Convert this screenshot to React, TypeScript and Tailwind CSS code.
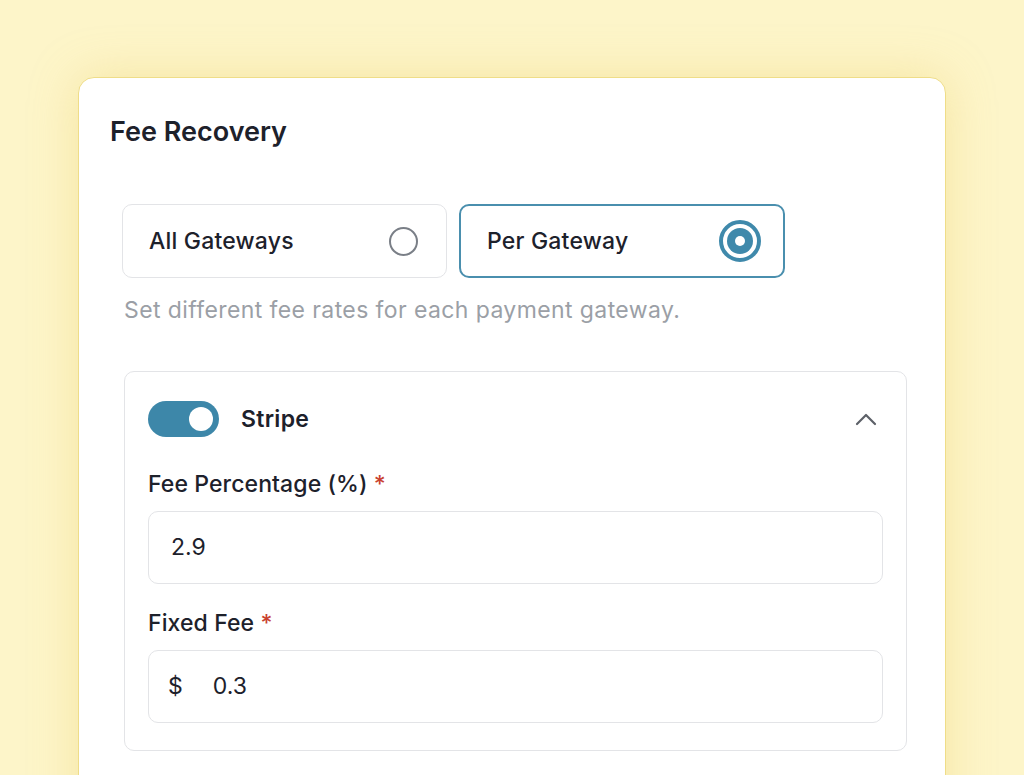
const font = { fontFamily: "Inter, 'Noto Sans', sans-serif" };

function Radio({ checked }: { checked: boolean }) {
  if (!checked) {
    return <span className="block h-[29px] w-[29px] rounded-full border-2 border-[#7a7f87] bg-white" />;
  }
  return (
    <span className="flex h-[42px] w-[42px] items-center justify-center rounded-full border-[4px] border-[#3f89ab] bg-white">
      <span className="flex h-[26px] w-[26px] items-center justify-center rounded-full bg-[#3f89ab]">
        <span className="h-[10px] w-[10px] rounded-full bg-white" />
      </span>
    </span>
  );
}

function GatewayOption({ label, checked }: { label: string; checked: boolean }) {
  return (
    <div
      className={
        checked
          ? "flex h-[74px] w-[326px] items-center justify-between rounded-[10px] border-2 border-[#4a8fae] bg-white pl-[26px] pr-[22px]"
          : "flex h-[74px] w-[325px] items-center justify-between rounded-[10px] border border-[#e3e4e7] bg-white pl-[26px] pr-[28px]"
      }
    >
      <span className="text-[23px] font-medium leading-[28px] tracking-[0.2px] text-[#1d212b]">{label}</span>
      <Radio checked={checked} />
    </div>
  );
}

function Field({ label, value, prefix }: { label: string; value: string; prefix?: string }) {
  return (
    <div className="flex flex-col gap-[13px]">
      <label className="text-[23px] font-medium leading-[28px] tracking-[0.1px] text-[#1d212b]">
        {label} <span className="text-[#c9412f]">*</span>
      </label>
      <div className="flex h-[73px] items-center rounded-[10px] border border-[#e3e4e7] bg-white px-[22px] text-[23px] text-[#1d212b]">
        {prefix && <span className="-ml-[3px] mr-[30px]">{prefix}</span>}
        <span>{value}</span>
      </div>
    </div>
  );
}

export default function App() {
  return (
    <div className="h-[775px] w-[1024px] overflow-hidden bg-[#fdf5c9] pl-[78px] pt-[77px]" style={font}>
      <div className="w-[868px] rounded-[16px] border border-[#efdd88] bg-white pb-[80px] pt-[36px] shadow-[0_0_48px_rgba(232,200,90,0.35)]">
        <h2 className="pl-[31px] text-[27px] font-semibold leading-[36px] text-[#1d212b]">Fee Recovery</h2>

        <div className="mt-[54px] pl-[43px] pr-[38px]">
          <div className="flex gap-[12px]">
            <GatewayOption label="All Gateways" checked={false} />
            <GatewayOption label="Per Gateway" checked />
          </div>
          <p className="mt-[18px] pl-[2px] text-[23px] leading-[28px] tracking-[0.4px] text-[#9b9fa6]">
            Set different fee rates for each payment gateway.
          </p>

          {/* Stripe gateway settings */}
          <div className="ml-[2px] mt-[47px] rounded-[10px] border border-[#e3e4e7] px-[23px] pb-[27px] pt-[29px]">
            <div className="flex items-center justify-between">
              <div className="flex items-center gap-[22px]">
                <span className="flex h-[36px] w-[71px] items-center justify-end rounded-full bg-[#3d87a9] pr-[6px]">
                  <span className="h-[24px] w-[24px] rounded-full bg-white" />
                </span>
                <span className="text-[23px] font-semibold leading-[28px] tracking-[0.3px] text-[#1d212b]">Stripe</span>
              </div>
              <svg width="22" height="14" viewBox="0 0 22 14" fill="none" className="mr-[6px]">
                <path d="M2 12 L11 3 L20 12" stroke="#5d6168" strokeWidth="2.2" strokeLinecap="round" strokeLinejoin="round" />
              </svg>
            </div>

            <div className="mt-[33px] flex flex-col gap-[25px]">
              <Field label="Fee Percentage (%)" value="2.9" />
              <Field label="Fixed Fee" value="0.3" prefix="$" />
            </div>
          </div>
        </div>
      </div>
    </div>
  );
}
